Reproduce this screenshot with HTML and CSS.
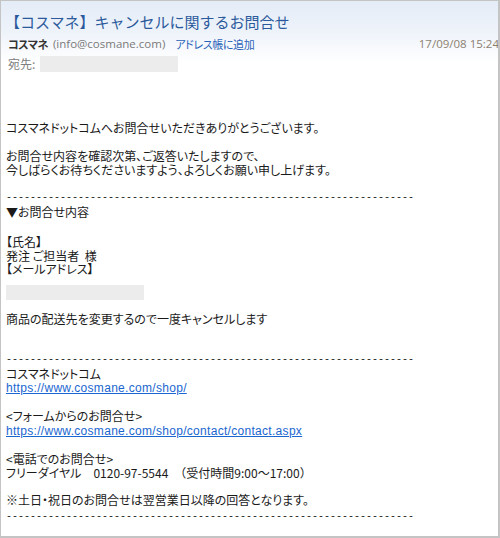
FILE: index.html
```html
<!DOCTYPE html>
<html lang="ja">
<head>
<meta charset="utf-8">
<title>【コスマネ】キャンセルに関するお問合せ</title>
<link rel="stylesheet" href="styles.css">
</head>
<body>
<div class="mail">
  <header class="head">
    <h1 class="subject">【コスマネ】キャンセルに関するお問合せ</h1>
    <div class="from-row">
      <span class="from-name">コスマネ</span>
      <span class="from-addr">(info@cosmane.com)</span>
      <a class="add-link" href="#">アドレス帳に追加</a>
      <span class="date">17/09/08 15:24</span>
    </div>
    <div class="to-row">
      <span class="to-label">宛先:</span>
      <span class="redact redact-to"></span>
    </div>
  </header>
  <div class="body">
    <p class="blk b1">コスマネドットコムへお問合せいただきありがとうございます。</p>
    <p class="blk b2">お問合せ内容を確認次第、ご返答いたしますので、<br>今しばらくお待ちくださいますよう、よろしくお願い申し上げます。</p>
    <p class="blk b3"><span class="dash">--------------------------------------------------------------------</span><br>▼お問合せ内容</p>
    <p class="blk b4">【氏名】<br>発注 ご担当者&nbsp;&nbsp;様<br>【メールアドレス】</p>
    <div class="blk b5"><span class="redact redact-mail"></span></div>
    <p class="blk b6">商品の配送先を変更するので一度キャンセルします</p>
    <p class="blk b7"><span class="dash">--------------------------------------------------------------------</span><br>コスマネドットコム<br><a class="url" href="#">https://www.cosmane.com/shop/</a></p>
    <p class="blk b8">&lt;フォームからのお問合せ&gt;<br><a class="url" href="#">https://www.cosmane.com/shop/contact/contact.aspx</a></p>
    <p class="blk b9">&lt;電話でのお問合せ&gt;<br>フリーダイヤル<span class="wide">　</span>0120-97-5544<span class="wide">　（受付時間</span>9:00～17:00<span class="wide">）</span></p>
    <p class="blk b10">※土日・祝日のお問合せは翌営業日以降の回答となります。<br><span class="dash">--------------------------------------------------------------------</span></p>
  </div>
</div>
</body>
</html>
```

FILE: styles.css
```css
html, body {
  margin: 0;
  padding: 0;
  background: #ffffff;
}

.mail {
  box-sizing: border-box;
  width: 500px;
  height: 538px;
  border: 1px solid #c4c4c4;
  border-right-width: 2px;
  border-bottom-width: 2px;
  overflow: hidden;
  background: #ffffff;
}

.head {
  padding: 9px 0 0 4px;
  background: linear-gradient(to bottom, #e4ecf7 0px, #eef3fa 30px, #ffffff 62px);
  height: 71px;
  box-sizing: border-box;
}

.subject {
  margin: 0;
  font: 400 15px/24px "Noto Sans CJK JP", sans-serif;
  color: #2b5a9c;
  white-space: nowrap;
}

.from-row {
  display: flex;
  align-items: center;
  margin: 2px -1px 0 3px;
  height: 16px;
  font: 11px/16px "Noto Sans CJK JP", sans-serif;
  font-feature-settings: "palt";
  white-space: nowrap;
}

.from-name {
  color: #333333;
  font-weight: 700;
  letter-spacing: -0.5px;
  margin-right: 5px;
}

.from-addr {
  color: #7a7a7a;
  margin-right: 10px;
  font-family: "Open Sans", "Noto Sans", sans-serif;
  font-size: 11.5px;
}

.add-link {
  color: #2a63b8;
  text-decoration: none;
  letter-spacing: -0.4px;
}

.date {
  margin-left: auto;
  color: #8d7f70;
  font-family: "Open Sans", "Noto Sans", sans-serif;
  font-size: 11.5px;
}

.to-row {
  display: flex;
  align-items: center;
  margin: 4px 0 0 3px;
  height: 16px;
}

.to-label {
  font: 12px/16px "Noto Sans CJK JP", sans-serif;
  color: #808080;
  margin-right: 5px;
}

.redact {
  display: block;
  background: #ececec;
}

.redact-to {
  width: 138px;
  height: 16px;
}

.body {
  padding: 49px 0 0 5px;
  font: 12px/13.5px "Noto Sans CJK JP", sans-serif;
  font-feature-settings: "palt";
  color: #1a1a1a;
  white-space: nowrap;
}

.blk {
  margin: 13.5px 0 0 0;
}

.b1 { margin-top: 0; }
.b2 { margin-top: 14.5px; }
.b3 { margin-top: 12px; }
.b4 { margin-top: 17.25px; }
.b5 { margin-top: 9.25px; }
.b6 { margin-top: 12px; }
.b7 { margin-top: 24.5px; }
.b8 { margin-top: 13.5px; }
.b9 { margin-top: 13.75px; line-height: 14px; }
.b10 { margin-top: 13.5px; }

.redact-mail {
  width: 138px;
  height: 15px;
}

.wide {
  font-feature-settings: normal;
}

.dash {
  font: 10px/13.5px "Liberation Mono", monospace;
  color: #222222;
  letter-spacing: 0;
}

.url {
  font-family: "Liberation Sans", Arial, sans-serif;
  letter-spacing: 0.3px;
  color: #1a66d0;
  text-decoration: underline;
}
```
